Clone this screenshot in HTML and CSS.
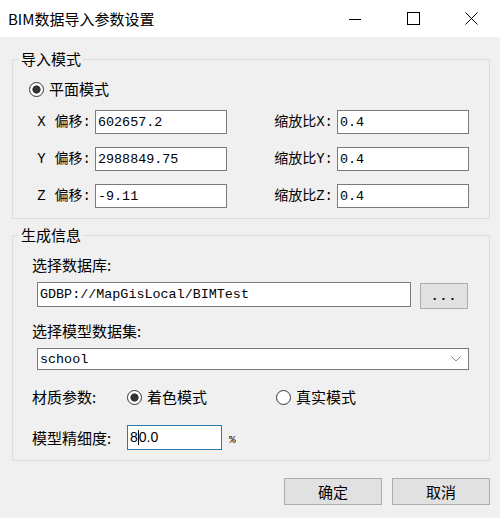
FILE: index.html
```html
<!DOCTYPE html>
<html>
<head>
    <meta charset="utf-8">
    <title>BIM数据导入参数设置</title>
    <link rel="stylesheet" href="styles.css">
</head>
<body>
    <div class="window">
        <div class="titlebar">
            <span class="title">BIM数据导入参数设置</span>
            <div class="controls">
                <span class="ctl">
                    <svg width="12" height="12" viewBox="0 0 12 12"><path d="M0 6.5H12" stroke="#000" stroke-width="1"/></svg>
                </span>
                <span class="ctl">
                    <svg width="13" height="13" viewBox="0 0 13 13"><rect x="0.5" y="0.5" width="12" height="12" fill="none" stroke="#000" stroke-width="1"/></svg>
                </span>
                <span class="ctl">
                    <svg width="13" height="13" viewBox="0 0 13 13"><path d="M0.5 0.5L12.5 12.5M12.5 0.5L0.5 12.5" stroke="#000" stroke-width="1"/></svg>
                </span>
            </div>
        </div>

        <div class="content">
            <fieldset class="group group-mode">
                <legend>导入模式</legend>
                <div class="mode-row">
                    <label class="radio"><span class="dot checked"></span>平面模式</label>
                </div>
                <div class="offset-grid">
                    <span class="lbl"><span class="axis">X</span>偏移:</span>
                    <input class="field" value="602657.2">
                    <span class="lbl">缩放比X:</span>
                    <input class="field" value="0.4">

                    <span class="lbl"><span class="axis">Y</span>偏移:</span>
                    <input class="field" value="2988849.75">
                    <span class="lbl">缩放比Y:</span>
                    <input class="field" value="0.4">

                    <span class="lbl"><span class="axis">Z</span>偏移:</span>
                    <input class="field" value="-9.11">
                    <span class="lbl">缩放比Z:</span>
                    <input class="field" value="0.4">
                </div>
            </fieldset>

            <fieldset class="group group-info">
                <legend>生成信息</legend>
                <div class="row-label first">选择数据库:</div>
                <div class="db-row">
                    <input class="field db-field" value="GDBP://MapGisLocal/BIMTest">
                    <button class="btn browse-btn">...</button>
                </div>
                <div class="row-label">选择模型数据集:</div>
                <div class="select">
                    <span>school</span>
                    <svg width="10" height="6" viewBox="0 0 10 6"><path d="M0.5 0.5L5 5L9.5 0.5" fill="none" stroke="#8a8a8a" stroke-width="1"/></svg>
                </div>
                <div class="material-row">
                    <span class="mat-label">材质参数:</span>
                    <label class="radio radio-color"><span class="dot checked"></span>着色模式</label>
                    <label class="radio radio-real"><span class="dot"></span>真实模式</label>
                </div>
                <div class="precision-row">
                    <span class="mat-label">模型精细度:</span>
                    <div class="field focus">8<span class="caret"></span>0.0</div>
                    <span class="percent">%</span>
                </div>
            </fieldset>

            <div class="footer">
                <button class="btn">确定</button>
                <button class="btn">取消</button>
            </div>
        </div>
    </div>
</body>
</html>
```

FILE: styles.css
```css
* {
    box-sizing: border-box;
}
body {
    margin: 0;
    background-color: #f0f0f0;
    font-family: "Noto Sans CJK SC", "Liberation Sans", sans-serif;
    font-size: 14px;
    color: #000;
}
.window {
    width: 500px;
    height: 518px;
    background-color: #f0f0f0;
}
.titlebar {
    height: 37px;
    background-color: #fff;
    display: flex;
    align-items: center;
    justify-content: space-between;
    padding-left: 8px;
}
.title {
    font-size: 15px;
    line-height: 18px;
}
.controls {
    display: flex;
    height: 100%;
}
.ctl {
    width: 58px;
    height: 100%;
    display: flex;
    align-items: center;
    justify-content: center;
}
.content {
    padding: 0 10px 0 12px;
}
.group {
    margin: 0;
    padding: 0 0 10px 0;
    min-width: 0;
    border: 1px solid #dcdcdc;
}
.group legend {
    font-size: 15px;
    line-height: 18px;
    padding: 0 2px;
    margin-left: 6px;
}
.group-mode {
    margin-top: 13px;
}
.group-info {
    margin-top: 7px;
}
.radio {
    display: inline-flex;
    align-items: center;
    gap: 5px;
    font-size: 15px;
    line-height: 18px;
}
.dot {
    width: 15px;
    height: 15px;
    border-radius: 50%;
    border: 1px solid #333;
    background: #fff;
}
.dot.checked {
    background: radial-gradient(circle, #333 0 3.8px, #fff 4.4px);
}
.mode-row {
    display: flex;
    height: 18px;
    margin: 12px 0 0 16px;
}
.offset-grid {
    display: grid;
    grid-template-columns: 80px 132px 106px 132px;
    grid-auto-rows: 24px;
    column-gap: 2px;
    row-gap: 13px;
    margin-top: 12px;
    align-items: center;
}
.lbl {
    text-align: right;
    font-family: "Liberation Mono", "Noto Sans CJK SC", monospace;
    font-size: 14px;
    line-height: 18px;
    padding-right: 2px;
}
.axis {
    margin-right: 9px;
}
.field {
    height: 24px;
    border: 1px solid #7a7a7a;
    background: #fff;
    padding: 0 2px;
    font-family: "Liberation Mono", monospace;
    font-size: 13.4px;
    color: #000;
    outline: none;
    margin: 0;
}
.row-label {
    margin: 13px 0 0 19px;
    line-height: 18px;
    font-size: 15px;
}
.row-label.first {
    margin-top: 12px;
}
.db-row {
    display: flex;
    align-items: flex-start;
    margin: 8px 0 0 24px;
}
.db-field {
    width: 374px;
    height: 25px;
}
.btn {
    width: 98px;
    height: 27px;
    background: #e1e1e1;
    border: 1px solid #adadad;
    font-family: "Noto Sans CJK SC", sans-serif;
    font-size: 15px;
    color: #000;
    padding: 0;
}
.browse-btn {
    width: 48px;
    height: 26px;
    margin: 1px 0 0 9px;
    font-family: "Liberation Mono", monospace;
    font-size: 13px;
    font-weight: bold;
    letter-spacing: 1px;
}
.select {
    width: 432px;
    height: 22px;
    margin: 8px 0 0 24px;
    border: 1px solid #7a7a7a;
    background: #fff;
    display: flex;
    align-items: center;
    justify-content: space-between;
    padding: 0 7px 0 2px;
    font-family: "Liberation Mono", monospace;
    font-size: 13.4px;
}
.material-row {
    display: flex;
    align-items: center;
    margin: 18px 0 0 19px;
    height: 18px;
}
.mat-label {
    font-size: 15px;
    line-height: 18px;
    width: 95px;
}
.radio-real {
    margin-left: 69px;
}
.precision-row {
    display: flex;
    align-items: center;
    margin: 19px 0 0 19px;
}
.field.focus {
    width: 95px;
    height: 25px;
    border-color: #2b79ab;
    font-family: "Liberation Sans", sans-serif;
    font-size: 14px;
    line-height: 23px;
    display: flex;
    align-items: center;
}
.caret {
    display: inline-block;
    width: 1px;
    height: 15px;
    background: #000;
}
.percent {
    margin-left: 7px;
    font-family: "Liberation Mono", monospace;
    font-size: 11px;
    margin-top: 4px;
}
.footer {
    display: flex;
    justify-content: flex-end;
    gap: 10px;
    margin-top: 17px;
}
```
